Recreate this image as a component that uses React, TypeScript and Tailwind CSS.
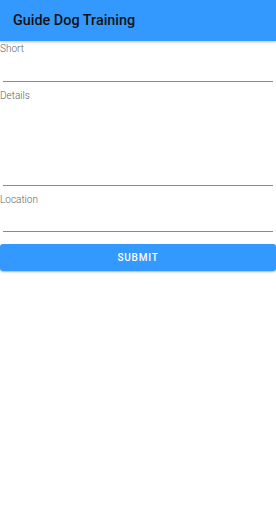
import React from 'react';

const Field: React.FC<{ label: string; height: string }> = ({ label, height }) => (
  <div className="flex flex-col">
    <span className="text-[10px] leading-[12px] text-[#5f5f5f] font-light">{label}</span>
    <div className={`${height} mx-[3px] border-b border-[#8a8a8a]`} />
  </div>
);

export default function App() {
  return (
    <div className="w-[276px] h-[512px] bg-white" style={{ fontFamily: 'Roboto, "Liberation Sans", sans-serif' }}>
      <header className="h-[41px] bg-[#3399ff] flex items-center px-[13px] shadow-[0_1px_3px_rgba(0,0,0,0.25)]">
        <h1 className="text-[14.4px] font-medium text-[#111]">Guide Dog Training</h1>
      </header>
      <div className="pt-[2px] flex flex-col gap-[8px]">
        <Field label="Short" height="h-[27px]" />
        <Field label="Details" height="h-[84px]" />
        <Field label="Location" height="h-[26px]" />
      </div>
      <button className="mt-[12px] w-full h-[27px] bg-[#3399ff] rounded-[3px] text-white text-[10px] font-medium tracking-[0.08em] shadow-[0_1px_2px_rgba(0,0,0,0.3)]">
        SUBMIT
      </button>
    </div>
  );
}
